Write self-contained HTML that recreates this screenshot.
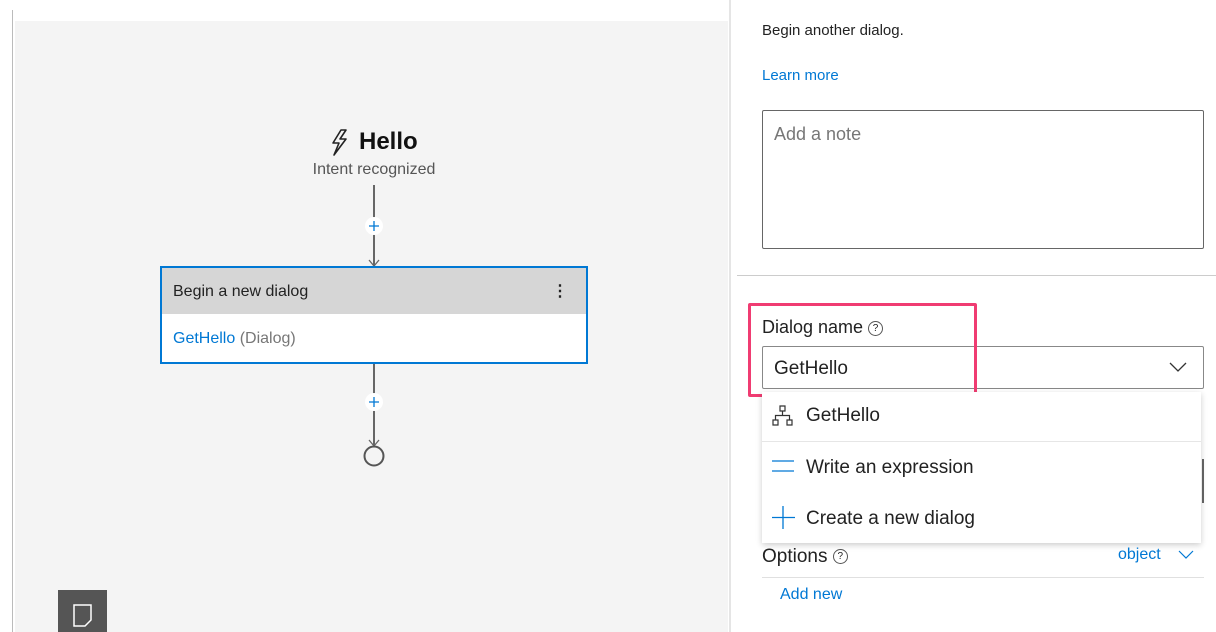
<!DOCTYPE html>
<html><head><style>
body{margin:0;width:1216px;height:632px;position:relative;overflow:hidden;background:#fff;font-family:"Liberation Sans",sans-serif;color:#323130}
.a{position:absolute}
</style></head><body>
<div class="a" style="left:12px;top:10px;width:1px;height:622px;background:#bbb"></div>
<div class="a" style="left:15px;top:21px;width:713px;height:611px;background:#f4f4f4"></div>
<div class="a" style="left:729px;top:0;width:2px;height:632px;background:#e5e5e5"></div>
<svg class="a" style="left:326px;top:128px" width="26" height="30" viewBox="0 0 26 30"><path d="M15 2 L7 15 L13 15 L8 27 L20 11 L14 11 L20 2 Z" fill="none" stroke="#222" stroke-width="1.6" stroke-linejoin="round"/></svg>
<div class="a" style="left:359px;top:128px;font-size:24px;font-weight:bold;color:#111">Hello</div>
<div class="a" style="left:274px;top:161px;width:200px;text-align:center;font-size:16px;color:#555">Intent recognized</div>
<div class="a" style="left:373px;top:185px;width:1.5px;height:80px;background:#666"></div>
<div class="a" style="left:373px;top:362px;width:1.5px;height:83px;background:#666"></div>
<svg class="a" style="left:362px;top:214px" width="24" height="52"><circle cx="12" cy="12" r="9" fill="#fff"/><path d="M12 7v10M7 12h10" stroke="#0078d4" stroke-width="1.3"/><path d="M7 46l5 6 5-6" fill="none" stroke="#666" stroke-width="1.3"/></svg>
<svg class="a" style="left:362px;top:390px" width="24" height="80"><circle cx="12" cy="12" r="9" fill="#fff"/><path d="M12 7v10M7 12h10" stroke="#0078d4" stroke-width="1.3"/><path d="M7 50l5 6 5-6" fill="none" stroke="#666" stroke-width="1.3"/><circle cx="12" cy="66" r="9.5" fill="none" stroke="#555" stroke-width="2"/></svg>
<div class="a" style="left:160px;top:266px;width:424px;height:94px;border:2px solid #0078d4;background:#fff">
 <div style="height:46px;background:#d6d6d6;font-size:16px;line-height:48px;padding-left:11px;color:#222">Begin a new dialog<span style="position:absolute;right:18px;top:0;font-weight:bold">⋮</span></div>
 <div style="font-size:16px;line-height:50px;padding-left:11px"><span style="color:#0078d4">GetHello</span> <span style="color:#777">(Dialog)</span></div>
</div>
<div class="a" style="left:58px;top:590px;width:49px;height:42px;background:#555"></div>
<svg class="a" style="left:72px;top:603px" width="22" height="26"><path d="M2 2h17v15l-6 6H2z" fill="none" stroke="#fff" stroke-width="1.5"/></svg>
<div class="a" style="left:762px;top:22px;font-size:15px;color:#222">Begin another dialog.</div>
<div class="a" style="left:762px;top:67px;font-size:15px;color:#0078d4">Learn more</div>
<div class="a" style="left:762px;top:110px;width:440px;height:137px;border:1px solid #666;border-radius:2px"></div>
<div class="a" style="left:774px;top:124px;font-size:18px;color:#777">Add a note</div>
<div class="a" style="left:737px;top:275px;width:479px;height:1px;background:#ccc"></div>
<div class="a" style="left:762px;top:317px;font-size:18px;color:#222">Dialog name <span style="display:inline-block;width:13px;height:13px;border:1px solid #555;border-radius:50%;font-size:10px;line-height:13px;text-align:center;vertical-align:2px">?</span></div>
<div class="a" style="left:762px;top:346px;width:440px;height:41px;border:1px solid #888;border-radius:2px"></div>
<div class="a" style="left:774px;top:358px;font-size:19px;color:#222">GetHello</div>
<svg class="a" style="left:1168px;top:360px" width="20" height="14"><path d="M2 3l8 8 8-8" fill="none" stroke="#333" stroke-width="1.3"/></svg>
<div class="a" style="left:1202px;top:459px;width:2px;height:44px;background:#666"></div>
<div class="a" style="left:748px;top:303px;width:223px;height:88px;border:3px solid #f03c72;border-radius:2px"></div>
<div class="a" style="left:762px;top:392px;width:439px;height:151px;background:#fff;box-shadow:0 2px 6px rgba(0,0,0,.2)">
 <div style="height:49px;border-bottom:1px solid #e6e6e6;position:relative">
  <svg class="a" style="left:10px;top:13px" width="22" height="22"><path d="M8 1h5v5H8zM1 15h5v5H1zM15 15h5v5h-5zM10.5 6v4.5M3.5 15v-4.5h14V15" fill="none" stroke="#333" stroke-width="1.2"/></svg>
  <div class="a" style="left:44px;top:13px;font-size:19px;color:#222">GetHello</div>
 </div>
 <svg class="a" style="left:10px;top:67px" width="24" height="16"><path d="M0 2h22M0 12h22" stroke="#0078d4" stroke-width="1.3"/></svg>
 <div class="a" style="left:44px;top:65px;font-size:19px;color:#222">Write an expression</div>
 <svg class="a" style="left:10px;top:114px" width="24" height="24"><path d="M11 0v23M0 11.5h23" stroke="#0078d4" stroke-width="1.3"/></svg>
 <div class="a" style="left:44px;top:116px;font-size:19px;color:#222">Create a new dialog</div>
</div>
<div class="a" style="left:762px;top:546px;font-size:19px;color:#222">Options <span style="display:inline-block;width:13px;height:13px;border:1px solid #555;border-radius:50%;font-size:10px;line-height:13px;text-align:center;vertical-align:3px">?</span></div>
<div class="a" style="left:1118px;top:546px;font-size:16px;color:#0078d4">object</div>
<svg class="a" style="left:1178px;top:549px" width="16" height="12"><path d="M1 2l7 7 7-7" fill="none" stroke="#0078d4" stroke-width="1.2"/></svg>
<div class="a" style="left:762px;top:577px;width:442px;height:1px;background:#e0e0e0"></div>
<div class="a" style="left:780px;top:586px;font-size:16px;color:#0078d4">Add new</div>
</body></html>
